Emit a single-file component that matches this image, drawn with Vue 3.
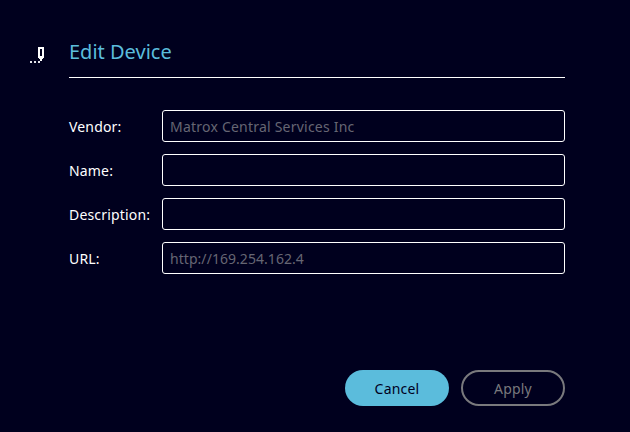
<script setup>
const fields = [
  { label: 'Vendor:', placeholder: 'Matrox Central Services Inc', tight: false },
  { label: 'Name:', placeholder: '', tight: false },
  { label: 'Description:', placeholder: '', tight: false },
  { label: 'URL:', placeholder: 'http://169.254.162.4', tight: true },
]
</script>

<template>
  <div class="page">
    <div class="icon-col">
      <svg class="icon" width="16" height="18" viewBox="0 0 16 18" shape-rendering="crispEdges">
        <rect x="1" y="15" width="2" height="2" fill="#e4e4ea" />
        <rect x="5" y="15" width="2" height="2" fill="#e4e4ea" />
        <rect x="9" y="15" width="2" height="2" fill="#e4e4ea" />
        <rect x="9" y="1" width="6" height="11" fill="#ffffff" />
        <rect x="11" y="3" width="2" height="7" fill="#00001e" />
        <rect x="10" y="12" width="4" height="1" fill="#ffffff" />
        <rect x="11" y="13" width="2" height="2" fill="#ffffff" />
      </svg>
    </div>
    <div class="main">
      <h1 class="title">Edit Device</h1>
      <form class="form" @submit.prevent>
        <label v-for="f in fields" :key="f.label" class="row">
          <span class="label">{{ f.label }}</span>
          <input class="input" :class="{ tight: f.tight }" type="text" :placeholder="f.placeholder" />
        </label>
      </form>
      <div class="actions">
        <button class="btn primary" type="button">Cancel</button>
        <button class="btn disabled" type="button" disabled>Apply</button>
      </div>
    </div>
  </div>
</template>

<style>
html, body { margin: 0; background: #00001e; }
</style>

<style scoped>
.page {
  width: 630px;
  height: 432px;
  box-sizing: border-box;
  display: flex;
  background: #00001e;
  font-family: "Noto Sans", "Open Sans", sans-serif;
  color: #fff;
  overflow: hidden;
}
.icon-col {
  width: 69px;
  flex: none;
  padding: 46px 0 0 29px;
  box-sizing: border-box;
}
.icon { display: block; }
.main {
  width: 496px;
  flex: none;
  display: flex;
  flex-direction: column;
}
.title {
  margin: 0;
  height: 78px;
  box-sizing: border-box;
  padding-top: 38px;
  border-bottom: 1px solid #fff;
  font-size: 20px;
  line-height: 27px;
  font-weight: 400;
  color: #5bbcdc;
}
.form {
  margin-top: 32px;
  display: flex;
  flex-direction: column;
  gap: 12px;
}
.row {
  display: flex;
  align-items: center;
  height: 32px;
}
.label {
  width: 93px;
  flex: none;
  font-size: 14px;
  line-height: 19px;
  letter-spacing: 0.17px;
}
.input {
  width: 403px;
  height: 32px;
  box-sizing: border-box;
  padding: 0 7px;
  border: 1px solid #fff;
  border-radius: 3px;
  background: transparent;
  color: #fff;
  font: inherit;
  font-size: 14px;
  letter-spacing: 0.22px;
  outline: none;
}
.input.tight {
  letter-spacing: 0.05px;
}
.input::placeholder {
  color: #666673;
  opacity: 1;
}
.actions {
  margin-top: 96px;
  display: flex;
  justify-content: flex-end;
  gap: 12px;
}
.btn {
  width: 104px;
  height: 36px;
  box-sizing: border-box;
  border-radius: 18px;
  font: inherit;
  font-size: 14px;
  letter-spacing: 0.2px;
  padding: 0;
}
.primary {
  border: none;
  background: #5bbcdc;
  color: #00001e;
}
.disabled {
  border: 2px solid #79797d;
  background: transparent;
  color: #79797d;
}
</style>
